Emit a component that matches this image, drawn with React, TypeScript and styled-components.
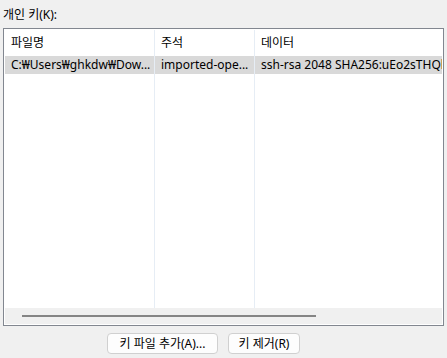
import React from 'react';
import styled, {createGlobalStyle} from 'styled-components';

const GlobalStyle = createGlobalStyle`
  body {
    margin: 0;
    background: #f0f0f0;
    font-family: "Noto Sans", "Noto Sans CJK KR", sans-serif;
    font-size: 12px;
    color: #000;
  }
`;

type Column = {
    title: string,
    value: string,
    width?: number
};

const columns: Column[] = [
    {title: '파일명', value: 'C:₩Users₩ghkdw₩Dow...', width: 150},
    {title: '주석', value: 'imported-ope...', width: 100},
    {title: '데이터', value: 'ssh-rsa 2048 SHA256:uEo2sTHQk'},
];

function App() {
    return (
        <Page>
            <GlobalStyle/>
            <Label>개인 키(K):</Label>
            <ListBox>
                <Table>
                    {columns.map((col) => (
                        <Col key={col.title} $width={col.width}>
                            <HeaderCell>{col.title}</HeaderCell>
                            <Cell>{col.value}</Cell>
                        </Col>
                    ))}
                </Table>
                <ScrollBar>
                    <Thumb/>
                </ScrollBar>
            </ListBox>
            <Buttons>
                <Button $width={111}>키 파일 추가(A)...</Button>
                <Button $width={72}>키 제거(R)</Button>
            </Buttons>
        </Page>
    )
}

const Page = styled.div`
  width: 447px;
  height: 358px;
  overflow: hidden;
`;
const Label = styled.div`
  height: 28px;
  padding-left: 3px;
  padding-top: 6px;
  line-height: 18px;
  box-sizing: border-box;
`;
const ListBox = styled.div`
  margin-left: 3px;
  width: 441px;
  height: 298px;
  box-sizing: border-box;
  border: 1px solid #828790;
  background: #fff;
  padding: 1px;
  display: flex;
  flex-direction: column;
`;
const Table = styled.div`
  flex: 1;
  display: flex;
  overflow: hidden;
`;
const Col = styled.div<{ $width?: number }>`
  ${({$width}) => $width ? `width: ${$width}px; flex: none;` : 'flex: 1; min-width: 0;'}
  box-sizing: border-box;
  border-right: ${({$width}) => $width ? '1px solid #e6edf5' : 'none'};
  display: flex;
  flex-direction: column;
`;
const HeaderCell = styled.div`
  height: 26px;
  line-height: 26px;
  padding-left: 6px;
  white-space: nowrap;
`;
const Cell = styled.div`
  height: 18px;
  line-height: 18px;
  padding-left: 6px;
  background: #d9d9d9;
  white-space: nowrap;
  overflow: hidden;
`;
const ScrollBar = styled.div`
  height: 16px;
  background: #f0f0f0;
  padding-left: 17px;
  padding-top: 7px;
  box-sizing: border-box;
`;
const Thumb = styled.div`
  width: 294px;
  height: 2px;
  background: #858585;
`;
const Buttons = styled.div`
  display: flex;
  gap: 10px;
  padding-left: 107px;
  padding-top: 7px;
`;
const Button = styled.button<{ $width: number }>`
  width: ${({$width}) => $width}px;
  height: 21px;
  padding: 0;
  background: #fdfdfd;
  border: 1px solid #d0d0d0;
  border-radius: 4px;
  font-family: inherit;
  font-size: 12px;
  line-height: 19px;
  color: #000;
`;

export default App;
